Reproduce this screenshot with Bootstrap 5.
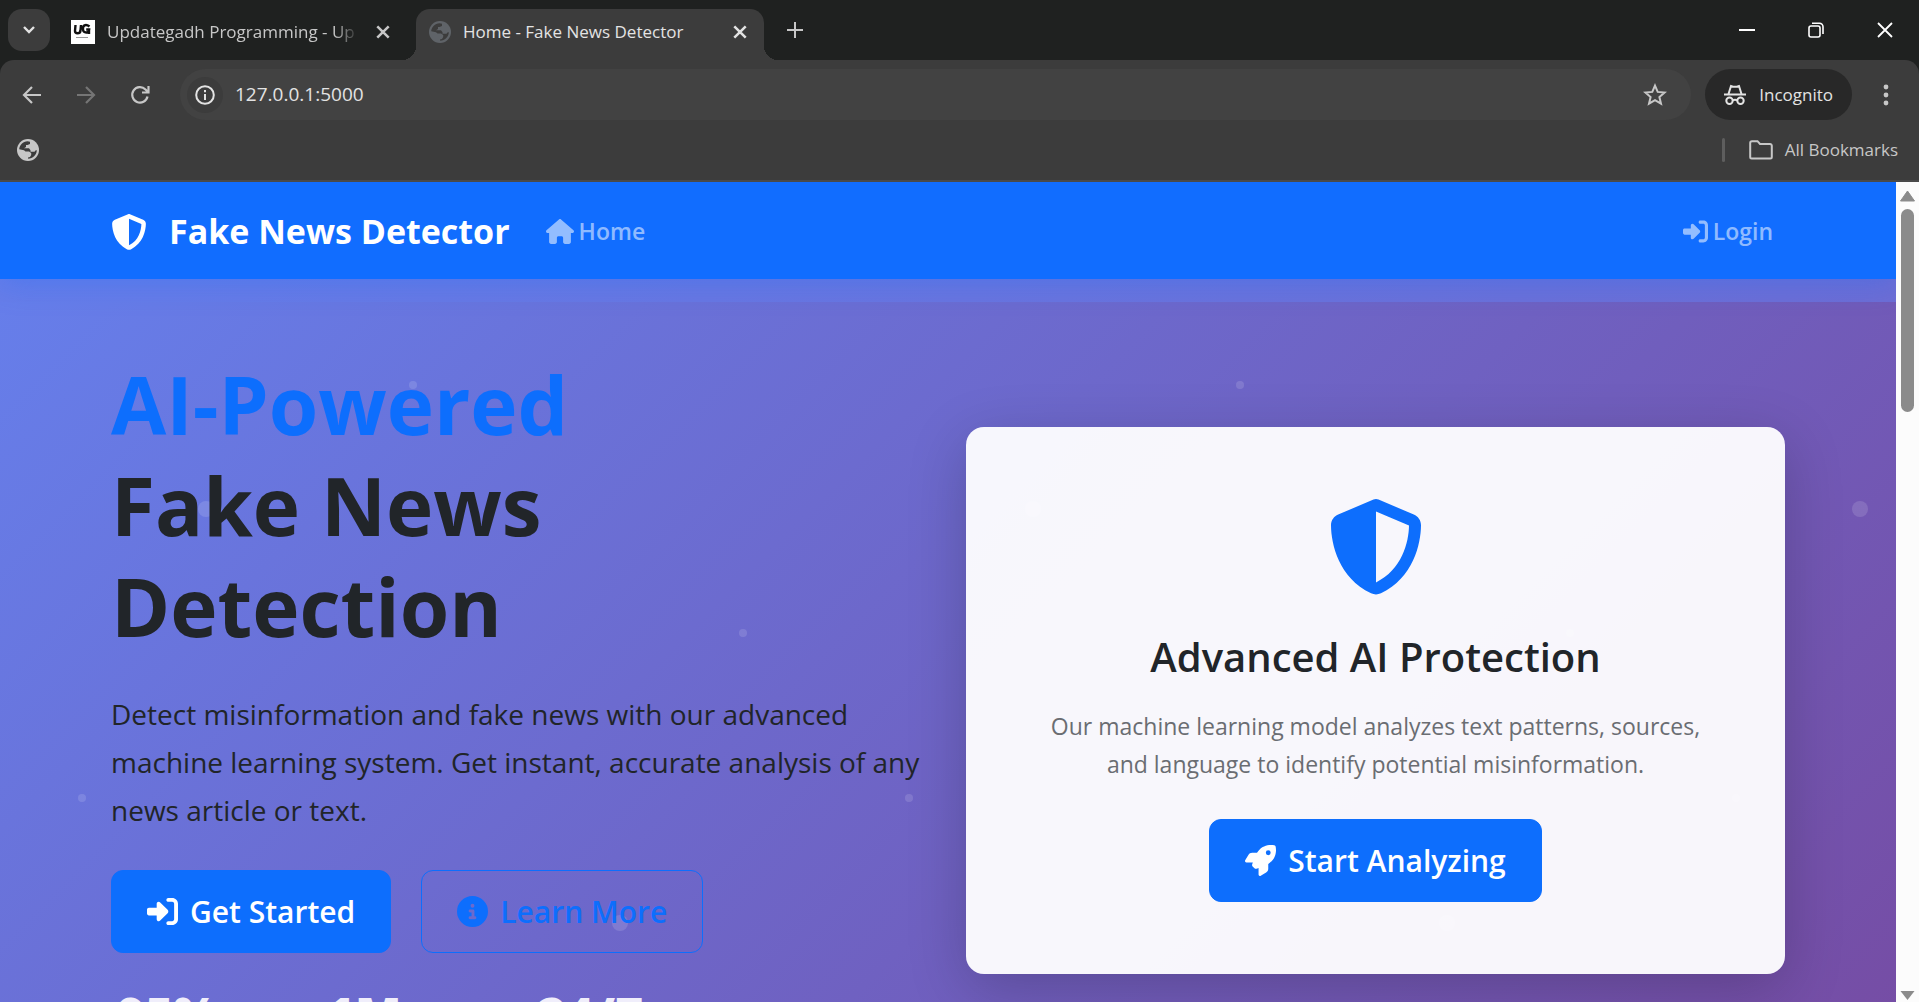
<!DOCTYPE html>
<html lang="en">
<head>
<meta charset="utf-8">
<meta name="viewport" content="width=device-width, initial-scale=1">
<title>Home - Fake News Detector</title>
<link href="https://cdn.jsdelivr.net/npm/bootstrap@5.3.0/dist/css/bootstrap.min.css" rel="stylesheet">
<style>
  :root { font-size: 24px; --ui: "Open Sans", "Noto Sans", sans-serif; }
  body { font-family: var(--ui); height: 100vh; overflow: hidden; background: #3c3c3c; }
  svg { display: block; flex: none; }
  button, a { white-space: nowrap; }

  /* browser frame */
  .chrome-btn { border: 0; background: none; padding: 0; color: #c7c7c7; display: flex; align-items: center; justify-content: center; flex: none; }
  .tab-strip { height: 60px; background: #1f2120; padding-left: 8px; font-size: 17px; }
  .tab-search { width: 42px; height: 42px; border-radius: 14px; background: #3c3c3c; color: #e3e3e3; }
  .browser-tab { height: 51px; color: #c7c7c7; padding-bottom: 6px; }
  .tab-idle { width: 350px; padding-left: 21px; padding-right: 9px; }
  .tab-idle .tab-name { margin-right: 16px; -webkit-mask-image: linear-gradient(90deg, #000 90%, transparent); mask-image: linear-gradient(90deg, #000 90%, transparent); }
  .tab-live { position: relative; width: 348px; padding-left: 13px; padding-right: 16px; margin-left: 16px; background: #3c3c3c; border-radius: 14px 14px 0 0; color: #e3e3e3; }
  .tab-live::before, .tab-live::after { content: ""; position: absolute; bottom: 0; width: 14px; height: 14px; }
  .tab-live::before { right: 100%; background: radial-gradient(circle at 0 0, transparent 14px, #3c3c3c 14px); }
  .tab-live::after { left: 100%; background: radial-gradient(circle at 100% 0, transparent 14px, #3c3c3c 14px); }
  .tab-live .chrome-btn { color: #e3e3e3; }
  .tab-name { overflow: hidden; white-space: nowrap; }
  .new-tab { margin-left: 16px; }
  .win-btn { width: 69px; height: 60px; color: #fff; }
  .tool-shell { background: #1f2120; }
  .tool-row { background: #3c3c3c; border-radius: 14px 14px 0 0; padding: 9px 15px 0 14px; height: 60px; }
  .nav-btn { width: 36px; height: 51px; }
  .nav-btn + .nav-btn { margin-left: 18px; }
  .nav-off { color: #757575; }
  .address { height: 51px; border-radius: 26px; background: #424242; padding: 0 24px 0 7px; margin-left: 22px; }
  .site-info { width: 36px; height: 36px; border-radius: 50%; background: #3c3c3c; color: #e3e3e3; }
  .address input { border: 0; background: none; color: #e3e3e3; font-size: 19px; padding: 0; outline: 0; min-width: 0; }
  .incognito { height: 51px; border-radius: 26px; background: #282828; color: #e3e3e3; font-size: 17px; padding: 0 19px; gap: 13px; margin: 0 16px 0 14px; }
  .marks-row { height: 62px; background: #3c3c3c; border-bottom: 2px solid #4a4a4a; padding: 0 21px 0 17px; color: #c7c7c7; font-size: 17px; }
  .marks-row a { color: inherit; text-decoration: none; }
  .marks-rule { width: 3px; height: 24px; border-radius: 2px; background: #5e5e5e; margin-right: 24px; }
  .icon-dim { color: #5f6368; }
  .icon-lit { color: #bdc1c6; }

  /* page */
  .viewport { min-height: 0; }
  .page { min-width: 0; overflow: hidden; background: linear-gradient(135deg, #667eea 0%, #7067cc 100%); }
  .container { max-width: 1710px; }
  .site-nav { background: #116dff; padding: 2px 0 0; height: 97px; box-shadow: 0 3px 30px rgba(13, 110, 253, .3); z-index: 2; }
  .navbar-brand { font-size: 34px; font-weight: 700; margin-right: 36px; gap: 22px; padding: 0; }
  .site-nav .nav-link { font-size: 23px; font-weight: 600; color: rgba(255, 255, 255, .55); gap: 5px; padding: 0; }
  .site-nav .nav-link:last-child { padding-right: 12px; }
  .hero { margin-top: 23px; position: relative; background: linear-gradient(135deg, #667eea 0%, #764ba2 100%); min-height: 822px; }
  .hero-dots { position: absolute; inset: 0; width: 100%; height: 100%; }
  .hero .container { position: relative; padding-top: 51px; }
  .hero h1 { font-size: 80px; line-height: 101px; font-weight: 700; margin-bottom: 34px; color: #212529; }
  .hero .intro { font-size: 28px; line-height: 48px; margin-bottom: 36px; color: #212529; }
  .hero .btn { height: 83px; border-radius: 12px; font-size: 30px; font-weight: 600; padding: 0 35px; gap: 12px; display: inline-flex; align-items: center; }
  .btn-primary { background: #0d6efd; }
  .actions { gap: 30px; }
  .stats { margin-top: 32px; padding-left: 6px; gap: 108px; }
  .stat { font-size: 48px; line-height: 58px; font-weight: 800; color: #f0eefb; }
  .promo { background: rgba(255, 255, 255, .95); border: 0; border-radius: 18px; box-shadow: 0 15px 60px rgba(0, 0, 0, .2); padding: 72px; margin-top: 74px; }
  .promo h2 { font-size: 40px; line-height: 52px; font-weight: 600; margin: 0 0 24px; color: #212529; }
  .promo p { font-size: 23px; line-height: 38px; color: #6a6d72; margin-bottom: 36px; }

  .scroller { width: 23px; background: #fcfcfc; padding: 8px 0 2px; }
  .scroll-thumb { width: 13px; height: 203px; border-radius: 7px; background: #8b8b8b; margin-top: 7px; }
</style>
</head>
<body class="d-flex flex-column">
<svg width="0" height="0" class="position-absolute" aria-hidden="true">
  <symbol id="i-shield" viewBox="0 0 512 512"><path fill="currentColor" d="M256 0c4.6 0 9.2 1 13.4 2.9L457.7 82.8c22 9.3 38.4 31 38.3 57.2c-.5 99.2-41.3 280.7-213.6 363.2c-16.7 8-36.1 8-52.8 0C57.3 420.7 16.5 239.2 16 140c-.1-26.2 16.3-47.9 38.3-57.2L242.7 2.9C246.8 1 251.4 0 256 0zm0 66.8V444.8C394 378 431.1 230.1 432 141.4L256 66.8z"/></symbol>
  <symbol id="i-house" viewBox="0 0 576 512"><path fill="currentColor" d="M575.8 255.5c0 18-15 32.1-32 32.1h-32l.7 160.2c0 2.7-.2 5.4-.5 8.1V472c0 22.1-17.9 40-40 40H456c-1.1 0-2.2 0-3.3-.1c-1.4 .1-2.8 .1-4.2 .1H416 392c-22.1 0-40-17.9-40-40V448 384c0-17.7-14.3-32-32-32H256c-17.7 0-32 14.3-32 32v64 24c0 22.1-17.9 40-40 40H160 128.1c-1.5 0-3-.1-4.5-.2c-1.2 .1-2.4 .2-3.6 .2H104c-22.1 0-40-17.9-40-40V360c0-.9 0-1.9 .1-2.8V287.6H32c-18 0-32-14-32-32.1c0-9 3-17 10-24L266.4 8c7-7 15-8 22-8s15 2 21 7L564.8 231.5c8 7 12 15 11 24z"/></symbol>
  <symbol id="i-login" viewBox="0 0 512 512"><path fill="currentColor" d="M217.9 105.9L340.7 228.7c7.2 7.2 11.3 17.1 11.3 27.3s-4.1 20.1-11.3 27.3L217.9 406.1c-6.4 6.4-15 9.9-24 9.9c-18.7 0-33.9-15.2-33.9-33.9l0-62.1L32 320c-17.7 0-32-14.3-32-32l0-64c0-17.7 14.3-32 32-32l128 0 0-62.1c0-18.7 15.2-33.9 33.9-33.9c9 0 17.6 3.6 24 9.9zM352 416l64 0c17.7 0 32-14.3 32-32l0-256c0-17.7-14.3-32-32-32l-64 0c-17.7 0-32-14.3-32-32s14.3-32 32-32l64 0c53 0 96 43 96 96l0 256c0 53-43 96-96 96l-64 0c-17.7 0-32-14.3-32-32s14.3-32 32-32z"/></symbol>
  <symbol id="i-info" viewBox="0 0 512 512"><path fill="currentColor" d="M256 512A256 256 0 1 0 256 0a256 256 0 1 0 0 512zM216 336h24V272H216c-13.3 0-24-10.7-24-24s10.7-24 24-24h48c13.3 0 24 10.7 24 24v88h8c13.3 0 24 10.7 24 24s-10.7 24-24 24H216c-13.3 0-24-10.7-24-24s10.7-24 24-24zm40-208a32 32 0 1 1 0 64 32 32 0 1 1 0-64z"/></symbol>
  <symbol id="i-rocket" viewBox="0 0 512 512"><path fill="currentColor" d="M156.6 384.9L125.7 354c-8.5-8.5-11.5-20.8-7.7-32.2c3-8.9 7-20.5 11.8-33.8L24 288c-8.6 0-16.6-4.6-20.9-12.1s-4.2-16.7 .2-24.1l52.5-88.5c13-21.9 36.5-35.3 61.9-35.3l82.3 0c2.4-4 4.8-7.7 7.2-11.3C289.1-4.1 411.1-8.1 483.9 5.3c11.6 2.1 20.6 11.2 22.8 22.8c13.4 72.9 9.3 194.8-111.4 276.7c-3.5 2.4-7.3 4.8-11.3 7.2v82.3c0 25.4-13.4 49-35.3 61.9l-88.5 52.5c-7.4 4.4-16.6 4.5-24.1 .2s-12.1-12.2-12.1-20.9V380.8c-14.1 4.9-26.4 8.9-35.7 11.9c-11.2 3.6-23.4 .5-31.8-7.8zM384 168a40 40 0 1 0 0-80 40 40 0 1 0 0 80z"/></symbol>
  <symbol id="i-globe" viewBox="0 0 22 22"><circle cx="11" cy="11" r="11" fill="currentColor"/><path fill="#3c3c3c" d="M2.200 10.200C2.500 6 6 2.400 10.500 2.200L13 2.800V5L10.500 6H9v2L7 9.200h5l1.500 2v1.600h4L19 11l.8.600c-.3 4.600-4 8.200-8.600 8.200l-.2-1.300 2-.5 1.200-2V14l-2.200-1.500H8.500L7 11.200z"/></symbol>
  <symbol id="i-x" viewBox="0 0 14 14"><path d="M2 2l10 10M12 2L2 12" stroke="currentColor" stroke-width="2.200" fill="none"/></symbol>
</svg>

<header>
  <div class="tab-strip d-flex align-items-end">
    <button class="chrome-btn tab-search align-self-center" aria-label="Search tabs"><svg width="14" height="10" viewBox="0 0 14 10"><path d="M2 2l5 5 5-5" stroke="currentColor" stroke-width="2.400" fill="none"/></svg></button>
    <div class="browser-tab tab-idle d-flex align-items-center">
      <svg width="24" height="24" viewBox="0 0 24 24" class="me-2"><rect width="24" height="24" fill="#fff"/><path d="M4.500 5l-.5 6c0 3 5 3 5.400 0L10 5M18.500 6.500c-4-3-7-1-6.500 3 .3 4 6 4 6.200 0h-3M18 10v4" fill="none" stroke="#111" stroke-width="2.400"/><path d="M5 17.500h12" stroke="#999"/></svg>
      <span class="tab-name flex-grow-1">Updategadh Programming - Up</span>
      <button class="chrome-btn" aria-label="Close tab"><svg width="16" height="16"><use href="#i-x"/></svg></button>
    </div>
    <div class="browser-tab tab-live d-flex align-items-center">
      <svg width="22" height="22" class="me-2 icon-dim"><use href="#i-globe"/></svg>
      <span class="tab-name flex-grow-1">Home - Fake News Detector</span>
      <button class="chrome-btn" aria-label="Close tab"><svg width="16" height="16"><use href="#i-x"/></svg></button>
    </div>
    <button class="chrome-btn new-tab align-self-center" aria-label="New tab"><svg width="30" height="16" viewBox="0 0 30 16"><path d="M7 8h16M15 0v16" stroke="currentColor" stroke-width="2"/></svg></button>
    <div class="d-flex ms-auto">
      <button class="chrome-btn win-btn" aria-label="Minimize"><svg width="16" height="16"><path d="M0 8h16" stroke="currentColor" stroke-width="2"/></svg></button>
      <button class="chrome-btn win-btn" aria-label="Restore"><svg width="16" height="16" viewBox="0 0 16 16" fill="none" stroke="currentColor" stroke-width="1.600"><rect x="1" y="4" width="11" height="11" rx="2"/><path d="M4 1.200h7.500a3.500 3.500 0 0 1 3.500 3.500V12"/></svg></button>
      <button class="chrome-btn win-btn" aria-label="Close"><svg width="18" height="18" viewBox="0 0 18 18"><path d="M2 2l14 14M16 2L2 16" stroke="currentColor" stroke-width="1.800"/></svg></button>
    </div>
  </div>
  <div class="tool-shell">
    <div class="tool-row d-flex align-items-center">
      <button class="chrome-btn nav-btn" aria-label="Back"><svg width="20" height="20" viewBox="0 0 20 20" fill="none" stroke="currentColor" stroke-width="2.200"><path d="M19 10H2M10 2l-8 8 8 8"/></svg></button>
      <button class="chrome-btn nav-btn nav-off" aria-label="Forward"><svg width="20" height="20" viewBox="0 0 20 20" fill="none" stroke="currentColor" stroke-width="2.200"><path d="M1 10h17M10 2l8 8-8 8"/></svg></button>
      <button class="chrome-btn nav-btn" aria-label="Reload"><svg width="20" height="20" viewBox="0 0 20 20" fill="none" stroke="currentColor" stroke-width="2.200"><path d="M17.500 11.500A7.700 7.700 0 1 1 15.500 4.500L18 7M18.500 1v6.500H12"/></svg></button>
      <div class="address d-flex align-items-center flex-grow-1">
        <button class="chrome-btn site-info me-2" aria-label="Site information"><svg width="20" height="20" viewBox="0 0 20 20" fill="none" stroke="currentColor" stroke-width="2"><circle cx="10" cy="10" r="8.800"/><path d="M10 9v6M10 5v2.200"/></svg></button>
        <input class="flex-grow-1" type="text" value="127.0.0.1:5000" aria-label="Address">
        <button class="chrome-btn" aria-label="Bookmark this page"><svg width="24" height="24" viewBox="0 0 24 24"><path d="M12 2.600l2.700 6.300 6.900.6-5.200 4.500 1.600 6.700-6-3.600-6 3.600 1.600-6.700L2.400 9.500l6.900-.6z" fill="none" stroke="currentColor" stroke-width="2"/></svg></button>
      </div>
      <button class="chrome-btn incognito"><svg width="22" height="22" viewBox="0 0 22 22" fill="none" stroke="currentColor" stroke-width="2"><path d="M0 10.500h22M4.500 10L7 2l2 .8h4L15 2l2.500 8"/><circle cx="5.500" cy="16.800" r="3.200"/><circle cx="16.500" cy="16.800" r="3.200"/><path d="M8.500 16.500q2.500-1.500 5 0"/></svg>Incognito</button>
      <button class="chrome-btn nav-btn" aria-label="Menu"><svg width="6" height="22" fill="currentColor"><circle cx="3" cy="3" r="2.400"/><circle cx="3" cy="11" r="2.400"/><circle cx="3" cy="19" r="2.400"/></svg></button>
    </div>
  </div>
  <div class="marks-row d-flex align-items-center">
    <a href="#" aria-label="Bookmark" class="icon-lit"><svg width="22" height="22"><use href="#i-globe"/></svg></a>
    <span class="marks-rule ms-auto"></span>
    <a href="#" class="d-flex align-items-center"><svg width="24" height="20" viewBox="0 0 24 20" class="me-2"><path d="M1.200 17V3a1.800 1.800 0 0 1 1.800-1.800h5.500L11 4h10a1.800 1.800 0 0 1 1.800 1.800V17a1.500 1.500 0 0 1-1.500 1.500H2.700A1.500 1.500 0 0 1 1.200 17z" fill="none" stroke="currentColor" stroke-width="2"/></svg>All Bookmarks</a>
  </div>
</header>

<div class="viewport d-flex flex-grow-1">
  <main class="page flex-grow-1">
    <nav class="navbar navbar-expand navbar-dark site-nav">
      <div class="container">
        <a class="navbar-brand d-flex align-items-center" href="#"><svg width="36" height="36"><use href="#i-shield"/></svg>Fake News Detector</a>
        <a class="nav-link d-flex align-items-center me-auto" href="#"><svg width="28" height="25"><use href="#i-house"/></svg>Home</a>
        <a class="nav-link d-flex align-items-center" href="#"><svg width="25" height="25"><use href="#i-login"/></svg>Login</a>
      </div>
    </nav>
    <section class="hero">
      <svg class="hero-dots" aria-hidden="true"><defs><pattern id="dots" width="827" height="827" patternUnits="userSpaceOnUse"><g fill="#fff" fill-opacity=".13"><circle cx="413" cy="83" r="4"/><circle cx="206" cy="207" r="8"/><circle cx="743" cy="331" r="4"/><circle cx="82" cy="496" r="4"/><circle cx="620" cy="621" r="8"/></g></pattern></defs><rect width="100%" height="100%" fill="url(#dots)"/></svg>
      <div class="container">
        <div class="row">
          <div class="col-6">
            <h1><span class="text-primary">AI-Powered</span><br>Fake News<br>Detection</h1>
            <p class="intro">Detect misinformation and fake news with our advanced machine learning system. Get instant, accurate analysis of any news article or text.</p>
            <div class="d-flex actions">
              <a href="#" class="btn btn-primary"><svg width="31" height="31"><use href="#i-login"/></svg>Get Started</a>
              <a href="#" class="btn btn-outline-primary"><svg width="31" height="31"><use href="#i-info"/></svg>Learn More</a>
            </div>
            <div class="d-flex stats"><span class="stat">95%</span><span class="stat">1M+</span><span class="stat">24/7</span></div>
          </div>
          <div class="col-6">
            <div class="card promo text-center align-items-center">
              <svg width="96" height="96" class="text-primary mb-4"><use href="#i-shield"/></svg>
              <h2>Advanced AI Protection</h2>
              <p>Our machine learning model analyzes text patterns, sources, and language to identify potential misinformation.</p>
              <a href="#" class="btn btn-primary"><svg width="31" height="31"><use href="#i-rocket"/></svg>Start Analyzing</a>
            </div>
          </div>
        </div>
      </div>
    </section>
  </main>
  <div class="scroller d-flex flex-column align-items-center" aria-hidden="true">
    <svg width="15" height="12"><path d="M7.500 1L14.500 11H.5z" fill="#8b8b8b" stroke="#8b8b8b" stroke-linejoin="round"/></svg>
    <div class="scroll-thumb"></div>
    <svg class="mt-auto" width="15" height="9"><path d="M7.500 9L14.500 0H.5z" fill="#8b8b8b"/></svg>
  </div>
</div>
<script src="https://cdn.jsdelivr.net/npm/bootstrap@5.3.0/dist/js/bootstrap.bundle.min.js"></script>
</body>
</html>
